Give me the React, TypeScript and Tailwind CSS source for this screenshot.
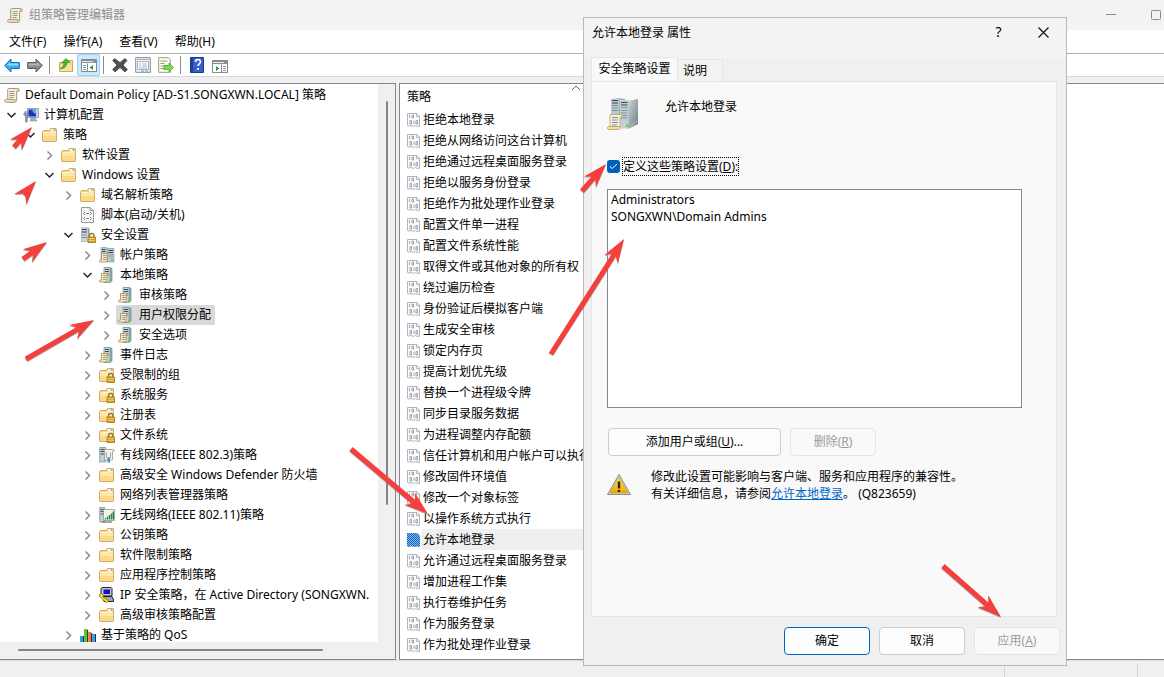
import React from "react";

type IconName =
  | "scroll" | "computer" | "folder" | "script" | "serverLock" | "servers" | "server"
  | "folderLock" | "wired" | "wireless" | "ipsec" | "qos";

type TreeItem = { level: number; label: string; icon: IconName; state?: "open" | "closed"; selected?: boolean };

const tree: TreeItem[] = [
  { level: 0, label: "Default Domain Policy [AD-S1.SONGXWN.LOCAL] 策略", icon: "scroll" },
  { level: 1, label: "计算机配置", icon: "computer", state: "open" },
  { level: 2, label: "策略", icon: "folder", state: "open" },
  { level: 3, label: "软件设置", icon: "folder", state: "closed" },
  { level: 3, label: "Windows 设置", icon: "folder", state: "open" },
  { level: 4, label: "域名解析策略", icon: "folder", state: "closed" },
  { level: 4, label: "脚本(启动/关机)", icon: "script" },
  { level: 4, label: "安全设置", icon: "serverLock", state: "open" },
  { level: 5, label: "帐户策略", icon: "servers", state: "closed" },
  { level: 5, label: "本地策略", icon: "server", state: "open" },
  { level: 6, label: "审核策略", icon: "server", state: "closed" },
  { level: 6, label: "用户权限分配", icon: "server", state: "closed", selected: true },
  { level: 6, label: "安全选项", icon: "server", state: "closed" },
  { level: 5, label: "事件日志", icon: "server", state: "closed" },
  { level: 5, label: "受限制的组", icon: "folderLock", state: "closed" },
  { level: 5, label: "系统服务", icon: "folderLock", state: "closed" },
  { level: 5, label: "注册表", icon: "folderLock", state: "closed" },
  { level: 5, label: "文件系统", icon: "folderLock", state: "closed" },
  { level: 5, label: "有线网络(IEEE 802.3)策略", icon: "wired", state: "closed" },
  { level: 5, label: "高级安全 Windows Defender 防火墙", icon: "folder", state: "closed" },
  { level: 5, label: "网络列表管理器策略", icon: "folder" },
  { level: 5, label: "无线网络(IEEE 802.11)策略", icon: "wireless", state: "closed" },
  { level: 5, label: "公钥策略", icon: "folder", state: "closed" },
  { level: 5, label: "软件限制策略", icon: "folder", state: "closed" },
  { level: 5, label: "应用程序控制策略", icon: "folder", state: "closed" },
  { level: 5, label: "IP 安全策略，在 Active Directory (SONGXWN.", icon: "ipsec", state: "closed" },
  { level: 5, label: "高级审核策略配置", icon: "folder", state: "closed" },
  { level: 4, label: "基于策略的 QoS", icon: "qos", state: "closed" },
];

const indents = ["pl-0", "pl-1", "pl-[23px]", "pl-[42px]", "pl-[61px]", "pl-20", "pl-[99px]"];

const policies = [
  "拒绝本地登录", "拒绝从网络访问这台计算机", "拒绝通过远程桌面服务登录", "拒绝以服务身份登录",
  "拒绝作为批处理作业登录", "配置文件单一进程", "配置文件系统性能", "取得文件或其他对象的所有权",
  "绕过遍历检查", "身份验证后模拟客户端", "生成安全审核", "锁定内存页", "提高计划优先级",
  "替换一个进程级令牌", "同步目录服务数据", "为进程调整内存配额", "信任计算机和用户帐户可以执行委派",
  "修改固件环境值", "修改一个对象标签", "以操作系统方式执行", "允许本地登录", "允许通过远程桌面服务登录",
  "增加进程工作集", "执行卷维护任务", "作为服务登录", "作为批处理作业登录",
];

const arrows: [number, number, number, number][] = [
  [14, 147, 32, 127],
  [24, 195, 36, 181],
  [23, 259, 47, 242],
  [26, 359, 94, 320],
  [582, 191, 606, 164],
  [551, 354, 624, 239],
  [351, 449, 428, 514],
  [943, 566, 1001, 617],
];

function Svg({ children, size = 16 }: { children: React.ReactNode; size?: number }) {
  return (
    <svg width={size} height={size} viewBox="0 0 16 16" className="block shrink-0" aria-hidden="true">
      {children}
    </svg>
  );
}

function ScrollShape() {
  return (
    <>
      <path d="M4.5 1.5h9.2c1 0 1.6.7 1.6 1.6s-.6 1.4-1.4 1.4h-1.3v8.8c0 1.2-.7 1.9-1.7 1.9H3.5" fill="#f8efd0" stroke="#a39b86" />
      <path d="M4.5 1.5c-.6.3-.8.8-.8 1.5v9.5h7.2v1.2c0 .8-.4 1.5-1 1.5H2.2C1.200 15.200.600 14.700.600 13.900s.5-1.400 1.300-1.400h1.800" fill="#f5e8be" stroke="#a39b86" />
      <path d="M5.500 4.500h5M5.500 6.500h5M5.500 8.500h5M5.500 10.500h4" stroke="#9a95a0" />
      <path d="M13 2.200h1.700v1.700H13z" fill="#dcb75c" />
    </>
  );
}

function FolderShape() {
  return (
    <>
      <path d="M.5 4.500 1.500 3.500h5.500l1.500-2h5.500l.5.500v12l-.5.500H1l-.5-.5z" fill="#f5d488" stroke="#d3ad5f" />
      <path d="M9 2.300h4.500v1.400H9z" fill="#fff" />
      <path d="M11.500 2.300h2v1.400h-2z" fill="#5da9dc" />
      <path d="M1 5h7l1-1h5v5H1z" fill="#fde6a6" />
      <path d="M1 9h13v5H1z" fill="#fad98a" />
      <path d="M1.500 5.500h7l1-1h4" fill="none" stroke="#fff3cc" />
    </>
  );
}

function LockShape() {
  return (
    <>
      <path d="M9.500 10V8.500a2.200 2.200 0 0 1 4.400 0V10" fill="none" stroke="#8b7438" strokeWidth="1.300" />
      <path d="M8 10h7.500v5.500H8z" fill="#d5a32c" stroke="#a27413" strokeWidth=".8" />
      <path d="M8.500 11.500h6.500M8.500 13.500h6.500" stroke="#f2cf67" strokeWidth=".8" />
    </>
  );
}

function ServerShape() {
  return (
    <>
      <path d="M5 .5h6.500l1.500 1v12.500l-2 1.500H5z" fill="#8fa1aa" stroke="#7a8b93" strokeWidth=".7" />
      <path d="M5.500 1h5v14h-5z" fill="#cad6dc" />
      <path d="M6 2.500h4M6 4.500h4" stroke="#2f4b5b" />
      <path d="M6 6.500h4M6 8.500h4" stroke="#8fa1aa" />
      <path d="M10 12.500h2v2h-2z" fill="#4fe315" />
    </>
  );
}

function SmallScroll() {
  return (
    <>
      <path d="M2.500 6.500h6.500v1.500H8v7H1c-1-.4-1-2 .3-2h1.200z" fill="#f6ebc4" stroke="#a08d58" strokeWidth=".8" />
      <path d="M4 8.500h3M4 10.500h3M4 12.500h3" stroke="#8f8770" strokeWidth=".8" />
    </>
  );
}

function Icon({ name }: { name: IconName }) {
  switch (name) {
    case "scroll":
      return <Svg><ScrollShape /></Svg>;
    case "folder":
      return <Svg><FolderShape /></Svg>;
    case "folderLock":
      return <Svg><FolderShape /><LockShape /></Svg>;
    case "computer":
      return (
        <Svg>
          <path d="M4.500 1.500h11v9h-11z" fill="#c9d3dc" stroke="#8794a0" strokeWidth=".8" />
          <path d="M5.500 2.500H13v7H5.500z" fill="#1237c4" />
          <path d="M9 2.500h4v4c-2 .5-3-1-4-4z" fill="#7ba4ee" />
          <path d="M8 11h4l2 3H7z" fill="#a9b4bd" stroke="#77838d" strokeWidth=".5" />
          <path d="M.7 7.200 2.500 4l.5 3 1.300.200V4.500l1 2.200-1 2.300v5.500c-.2 1-1.600 1-1.800 0V9C1.500 8.800.7 8 .7 7.200z" fill="#8ea2b2" stroke="#5a7084" strokeWidth=".6" />
        </Svg>
      );
    case "script":
      return (
        <Svg>
          <path d="M1.500.500H10l3.500 3v12h-12V1z" fill="#f8f8f8" stroke="#9b9b9b" />
          <path d="M10 .5v3h3.500" fill="none" stroke="#9b9b9b" />
          <path d="m5 5-1.500 1.500L5 8M10 5l1.500 1.500L10 8M5 10l-1.500 1.500L5 13M10 10l1.500 1.500L10 13M6 6.500h3M6 11.500h3" fill="none" stroke="#555e70" strokeWidth=".8" />
        </Svg>
      );
    case "serverLock":
      return (
        <Svg>
          <path d="M1 .5h7l1.500 1V15H1z" fill="#91a2ab" />
          <path d="M1.500 1H8v13.500H1.500z" fill="#c9d4d9" />
          <path d="M2 2.500h5M2 5h5" stroke="#294352" strokeWidth="1.200" />
          <path d="M2 8h5M2 10.500h5" stroke="#7f929c" />
          <LockShape />
        </Svg>
      );
    case "servers":
      return (
        <Svg>
          <path d="M2 .5h6V13H2z" fill="#bccad0" stroke="#80929b" strokeWidth=".6" />
          <path d="M3 2.500h3.500M3 4.500h3.500" stroke="#334e5d" />
          <path d="M8.500 1.500H15V15H8.500z" fill="#bccad0" stroke="#80929b" strokeWidth=".6" />
          <path d="M9.500 3.500H14M9.500 5.500H14" stroke="#334e5d" />
          <path d="M9.500 8H14M9.500 10H14" stroke="#8fa1aa" />
          <path d="M12 12.500h2v2h-2z" fill="#4fe315" />
          <SmallScroll />
        </Svg>
      );
    case "server":
      return <Svg><ServerShape /><SmallScroll /></Svg>;
    case "wired":
      return (
        <Svg>
          <path d="M.7.500h6V15h-6z" fill="#c2ced4" stroke="#778a94" strokeWidth=".7" />
          <path d="M1.500 2.500H6M1.500 4.500H6M1.500 7H6" stroke="#3c5362" />
          <path d="M5.500 2.500h9.200c1 .3.9 2-.3 2H13.500v8.500h-8z" fill="#f5f3ea" stroke="#9c9788" strokeWidth=".8" />
          <path d="M7.500 5.500v5h4v-5M9.500 10.500v5" fill="none" stroke="#9aa3ad" />
          <path d="M8.500 11H11v4.500H8.500z" fill="#4a90c6" />
        </Svg>
      );
    case "wireless":
      return (
        <Svg>
          <path d="M.7.500h5V15h-5z" fill="#c2ced4" stroke="#778a94" strokeWidth=".7" />
          <path d="M1.500 2.500H5M1.500 4.500H5M1.500 7H5" stroke="#3c5362" />
          <path d="M4.500 2.500h11v11h-11z" fill="#f5f3ea" stroke="#9c9788" strokeWidth=".8" />
          <path d="M6.500 12.500V11M8.500 12.500V9.500M10.500 12.500V8M12.500 12.500V6.500M14.300 12.500V4.500" stroke="#1b8d4b" strokeWidth="1.400" />
          <path d="M3 15h10" stroke="#555" />
        </Svg>
      );
    case "ipsec":
      return (
        <Svg>
          <path d="M4 .5h8l1 1v7.500H2V1.500z" fill="#c3c3cc" stroke="#222" />
          <path d="M4.500 2.500H11v4.500H4.500z" fill="#1010d0" />
          <path d="M4 9.500h9l1.500 3.500v1.500H5z" fill="#a3a3ad" stroke="#222" />
          <path d="M.7 7.500 2.500 6.500l2 2L4 10l5.500 4L8 15.500 6.500 15 2.500 11 .7 10z" fill="#ffee12" stroke="#726a00" strokeWidth=".7" />
        </Svg>
      );
    case "qos":
      return (
        <Svg>
          <path d="M0 9h4v6H0z" fill="#2e9be6" /><path d="M3 9h1.200v6H3z" fill="#123c5d" />
          <path d="M4 2h3.500v13H4z" fill="#5fc332" /><path d="M7 3h1.200v12H7z" fill="#1f4d12" />
          <path d="M8.200 5h3v10h-3z" fill="#f0784e" /><path d="M11 6h1.200v9H11z" fill="#57200d" />
          <path d="M12.200 7h3v8h-3z" fill="#2e9be6" /><path d="M15 7h1v8h-1z" fill="#123c5d" />
        </Svg>
      );
  }
}

function Chevron({ state }: { state?: "open" | "closed" }) {
  return (
    <svg width="16" height="16" viewBox="0 0 16 16" className="mr-[3px] block shrink-0" aria-hidden="true">
      {state === "open" && <path d="m3.500 6 4 4 4-4" fill="none" stroke="#262626" strokeWidth="1.500" />}
      {state === "closed" && <path d="m5.500 4.500 4 4-4 4" fill="none" stroke="#8a8a8a" strokeWidth="1.500" />}
    </svg>
  );
}

function PolicyIcon({ selected }: { selected?: boolean }) {
  return (
    <Svg>
      <path d="M1.500 1.500h9.500l2.500 2.500v10.500l-1.500-.5-1 .5-1.500-1-2 1-2.500-1-2 .5-1.500-.5z" fill="#fafafa" stroke="#b4b4b8" />
      <path d="M10.500 1.500v3h3" fill="none" stroke="#b4b4b8" />
      <path d="M3.500 3v3M8 8.500v3.500M4 8.500h1.500V12H4zM10 8.500h1.500V12H10zM6 3h1.500v3H6z" fill="none" stroke="#9090aa" strokeWidth=".8" />
      {selected && (
        <>
          <defs>
            <pattern id="selectedDots" width="2" height="2" patternUnits="userSpaceOnUse">
              <path d="M0 0h1v1H0zM1 1h1v1H1z" fill="#0067c0" />
            </pattern>
          </defs>
          <path d="M1 1h10l3 3v11h-1l-2-1-2 1-3-1-3 1-2-1z" fill="#8fbbe2" />
          <path d="M1 1h10l3 3v11h-1l-2-1-2 1-3-1-3 1-2-1z" fill="url(#selectedDots)" />
        </>
      )}
    </Svg>
  );
}

function ToolButton({ label, active, children }: { label: string; active?: boolean; children: React.ReactNode }) {
  return (
    <button
      type="button"
      aria-label={label}
      className={
        active
          ? "flex h-[22px] w-[23px] items-center justify-center rounded-xs border border-[#99d1ff] bg-[#cce8ff]"
          : "flex h-[22px] w-[23px] items-center justify-center"
      }
    >
      <Svg>{children}</Svg>
    </button>
  );
}

function Separator() {
  return <span className="mr-1 ml-[3px] h-[18px] w-px bg-[#8c8c8c]" />;
}

function Toolbar() {
  return (
    <div role="toolbar" aria-label="工具栏" className="flex h-[23px] shrink-0 items-center border-b border-[#d9d9d9] bg-white">
      <ToolButton label="后退">
        <path d="M.7 8.500 7 2v3.500h8.300v6H7V15z" fill="#35aef0" stroke="#176fae" />
        <path d="M2.500 8.500 6 5v1.500h8.300v2z" fill="#8ad8fb" />
      </ToolButton>
      <ToolButton label="前进">
        <path d="M15.300 8.500 9 2v3.500H.7v6H9V15z" fill="#8a8a8a" stroke="#5d5d5d" />
        <path d="M13.500 8.500 10 5v1.500H1.700v2z" fill="#b3b3b3" />
      </ToolButton>
      <Separator />
      <ToolButton label="上一级">
        <path d="M1.500 5.500h6l1.500-2h5.500v11h-13z" fill="#f8d98f" stroke="#cfa858" />
        <path d="M2 8h12v6H2z" fill="#fbe0a0" />
        <path d="M2 11.500c3-1 4-3 4-5.500H3.500L8 1.500 12 5.500H9c0 4-3 6.500-7 6z" fill="#3fc02a" stroke="#1f8a16" strokeWidth=".6" />
      </ToolButton>
      <ToolButton label="显示控制台树" active>
        <path d="M.5 2.500h15v12H.5z" fill="#fff" stroke="#85898f" />
        <path d="M1 3h14v3H1z" fill="#8b8f96" />
        <path d="M1 4.500h11" stroke="#e9e9e9" />
        <path d="M2 8.500h3M2 10.500h3M2 12.500h3" stroke="#7b95b0" />
        <path d="M6.500 6.500v8" stroke="#85898f" />
        <path d="M12 8v5L8.500 10.500z" fill="#20a532" />
      </ToolButton>
      <Separator />
      <ToolButton label="删除">
        <path d="m2.500 1.500 5.500 4 5-4 2 2-4 4.500 4.500 4.500-2.500 2.500-5-4.500-5 4.500L.7 12.500 5 8 .7 3.700z" fill="#505050" stroke="#2f2f2f" strokeWidth=".6" />
      </ToolButton>
      <ToolButton label="属性">
        <path d="M.7.700h14.600v14.600H.7z" fill="#f4f6f8" stroke="#85898f" />
        <path d="M2 2.500h12" stroke="#a3b1c0" />
        <path d="M2.500 4.500h11v8h-11z" fill="#fff" stroke="#8593a5" strokeWidth=".7" />
        <path d="M4 7h2M7 7h5M4 9h2M7 9h5M4 11h8" stroke="#8aa2bc" strokeWidth=".8" />
        <path d="M6 14h3M10 14h3" stroke="#35b6e4" />
      </ToolButton>
      <ToolButton label="导出列表">
        <path d="M.7.700h9.600l2 2v12.600H.7z" fill="#fffdf0" stroke="#9c9c88" />
        <path d="M2.500 4h7M2.500 6.500h4M2.500 9h4M2.500 11.500h7" stroke="#9d9772" />
        <path d="M6 8.500h5V6l4.500 4.500L11 15v-2.500H6z" fill="#7fd94e" stroke="#3f9c23" strokeWidth=".7" />
      </ToolButton>
      <Separator />
      <ToolButton label="帮助">
        <path d="M1.500.500h13v15h-13z" fill="#3a5fc8" stroke="#1c3a8c" />
        <path d="M2 1h2v14H2z" fill="#1f3f9f" />
        <path d="M6.500 5c0-3.300 5-3.300 5-.2 0 2-2.500 2-2.500 4.200M9 11v2" fill="none" stroke="#fff" strokeWidth="1.700" />
      </ToolButton>
      <ToolButton label="显示操作窗格">
        <path d="M.5 3.500h15v12H.5z" fill="#fff" stroke="#85898f" />
        <path d="M1 4h14v3H1z" fill="#8b8f96" />
        <path d="M1 5.500h11" stroke="#e9e9e9" />
        <path d="M11 9.500h3M11 11.500h3M11 13.500h3" stroke="#7b95b0" />
        <path d="M9.500 7.500v8" stroke="#85898f" />
        <path d="M4 9v5l3.500-2.500z" fill="#20a532" />
      </ToolButton>
    </div>
  );
}

function TreePane() {
  return (
    <section className="flex w-[396px] shrink-0 flex-col border-y border-r border-[#828790] bg-[#f0f0f0] pb-px">
      <div className="flex min-h-0 flex-1">
        <ul role="tree" aria-label="策略树" className="min-h-0 min-w-0 flex-1 overflow-hidden rounded-br-xs bg-white pt-px">
          {tree.map((item, i) => (
            <li
              key={i}
              role="treeitem"
              aria-selected={!!item.selected}
              aria-expanded={item.state ? item.state === "open" : undefined}
              className={`flex h-5 items-center whitespace-nowrap ${indents[item.level]}`}
            >
              {item.level > 0 && <Chevron state={item.state} />}
              <span
                className={
                  item.selected
                    ? "flex h-5 items-center gap-[5px] rounded-xs bg-[#d9d9d9] pr-1 pl-0.5 -ml-0.5"
                    : item.level === 0
                      ? "flex h-5 items-center gap-[5px] pl-1"
                      : "flex h-5 items-center gap-[5px]"
                }
              >
                <Icon name={item.icon} />
                {item.label}
              </span>
            </li>
          ))}
        </ul>
        <div className="flex w-[17px] shrink-0 justify-center pt-[17px]">
          <div className="h-[404px] w-0.5 rounded-full bg-[#858585]" />
        </div>
      </div>
      <div className="flex h-4 shrink-0 items-center pl-[18px]">
        <div className="h-0.5 w-[305px] rounded-full bg-[#858585]" />
      </div>
    </section>
  );
}

function PolicyList() {
  return (
    <section className="min-w-0 flex-1 overflow-hidden border-y border-l border-[#828790] bg-white">
      <div className="w-[352px]">
        <div className="grid h-[25px] grid-cols-1 grid-rows-1">
          <span className="col-start-1 row-start-1 self-center pl-[7px]">策略</span>
          <svg width="10" height="6" viewBox="0 0 10 6" className="col-start-1 row-start-1 mt-px justify-self-center" aria-hidden="true">
            <path d="m1 5 4-4 4 4" fill="none" stroke="#5f5f5f" />
          </svg>
        </div>
        <ul role="listbox" aria-label="策略">
          {policies.map((p, i) => {
            const selected = i === 20;
            return (
              <li key={p} role="option" aria-selected={selected} className="flex h-[21px] items-center pl-1.5 whitespace-nowrap">
                <PolicyIcon selected={selected} />
                <span className={selected ? "flex h-full flex-1 items-center bg-[#efefef] pl-px" : "flex-1 pl-px"}>{p}</span>
              </li>
            );
          })}
        </ul>
      </div>
    </section>
  );
}

function DialogIcon() {
  return (
    <svg width="32" height="32" viewBox="0 0 32 32" className="block" aria-hidden="true">
      <defs>
        <linearGradient id="side" x1="0" x2="1" y1="0" y2="1">
          <stop offset="0" stopColor="#cdd4d7" />
          <stop offset="1" stopColor="#6f7c82" />
        </linearGradient>
      </defs>
      <path d="M4 1 12 0l6 1v25H4z" fill="url(#side)" />
      <path d="M4 1h8v25H4z" fill="#bccad1" />
      <path d="M5 2.500h6M5 5h6" stroke="#2f4855" />
      <path d="M5 7.500h6M5 10h6M5 12.500h6" stroke="#7f929b" />
      <path d="m21 3 10-2v25l-10 5z" fill="url(#side)" />
      <path d="M13 2h8.500v28.500H13z" fill="#c4d0d6" />
      <path d="M14 4.500h6.500M14 7h6.500" stroke="#2f4855" />
      <path d="M14 9.500h6.500M14 12.500h6.500M14 15h6.500M14 17.500h6.500M14 20h6.500" stroke="#81949d" />
      <path d="M19 26.500h2.500v2.500H19z" fill="#4fe315" />
      <path d="m23 28 7-5" stroke="#dbe0e2" strokeDasharray="1.500 1" />
      <path d="M3 16.500h11c1.500.3 1.300 2.500 0 2.500h-1v10H3z" fill="#fbf4db" stroke="#c5ae6b" />
      <path d="M1.500 28.500h11c.8 1.500 0 3-1 3H1.500c-1.500-.5-1.500-2.500 0-3z" fill="#f3df9e" stroke="#b89d54" strokeWidth=".8" />
      <path d="M5 19.500h6M5 22h6M5 24.500h6M5 27h5" stroke="#7e83a8" />
    </svg>
  );
}

function WarningIcon() {
  return (
    <svg width="24" height="24" viewBox="0 0 24 24" className="block shrink-0" aria-hidden="true">
      <defs>
        <linearGradient id="warn" x1="0" x2="0" y1="0" y2="1">
          <stop offset="0" stopColor="#ffe94a" />
          <stop offset="1" stopColor="#f0a800" />
        </linearGradient>
      </defs>
      <path d="M12 1.500 23.500 21.500H.5z" fill="#d9d9d9" stroke="#8b8b8b" strokeLinejoin="round" />
      <path d="M12 4.500 21 20H3z" fill="url(#warn)" stroke="#c79a10" strokeWidth=".7" />
      <path d="M12 8.500v7M12 17v2" stroke="#2c2200" strokeWidth="2.400" />
    </svg>
  );
}

function PropertiesDialog() {
  return (
    <div role="dialog" aria-label="允许本地登录 属性" className="absolute top-[17px] left-[583px] flex w-[484px] flex-col border border-[#b9b9b9] bg-[#f0f0f0]">
      <header className="flex h-10 items-center bg-[#f3f3f3] pl-2">
        <h2 className="flex-1 pb-2.5">允许本地登录 属性</h2>
        <button type="button" aria-label="帮助" className="h-10 w-[45px] pb-3 text-sm">?</button>
        <button type="button" aria-label="关闭" className="flex h-10 w-[45px] items-center justify-center pb-3">
          <svg width="11" height="11" viewBox="0 0 11 11" aria-hidden="true">
            <path d="m.5.500 10 10M10.500.500l-10 10" stroke="#111" strokeWidth="1.200" />
          </svg>
        </button>
      </header>
      <div role="tablist" className="flex h-[23px] items-end pl-[7px]">
        <button type="button" role="tab" aria-selected="true" className="-mb-px h-[25px] w-[87px] border border-b-0 border-[#e5e5e5] bg-[#f9f9f9] pb-0.5">
          安全策略设置
        </button>
        <button type="button" role="tab" aria-selected="false" className="h-[22px] w-[45px] border border-b-0 border-l-0 border-[#e5e5e5] bg-[#f3f3f3] pr-2.5">
          说明
        </button>
      </div>
      <div role="tabpanel" className="mr-[9px] ml-[7px] flex h-[536px] flex-col border border-[#e5e5e5] bg-[#f9f9f9] pl-[15px]">
        <div className="flex h-[75px] gap-[26px] pt-4">
          <DialogIcon />
          <span className="h-[18px] leading-[18px]">允许本地登录</span>
        </div>
        <div className="flex h-[19px] items-center gap-0.5">
          <span className="grid size-[13px] place-items-center">
            <input id="define" type="checkbox" defaultChecked className="col-start-1 row-start-1 size-[13px] appearance-none rounded-[3px] bg-[#005fb8]" />
            <svg width="9" height="7" viewBox="0 0 9 7" className="pointer-events-none col-start-1 row-start-1" aria-hidden="true">
              <path d="m1 3.500 2.200 2L8 1" fill="none" stroke="#fff" />
            </svg>
          </span>
          <label htmlFor="define" className="flex h-[19px] items-center border border-dotted border-black whitespace-nowrap">
            <span>定义这些策略设置(<u>D</u>):</span>
          </label>
        </div>
        <ul role="listbox" aria-label="用户或组" className="mt-[13px] mr-[34px] h-[219px] border border-[#828790] bg-white px-[3px] pt-px leading-[17px]">
          <li role="option" aria-selected="false">Administrators</li>
          <li role="option" aria-selected="false">SONGXWN\Domain Admins</li>
        </ul>
        <div className="mt-5 flex gap-[9px] pl-px">
          <button type="button" className="h-7 w-[173px] rounded border border-[#cccccc] bg-[#fdfdfd]">添加用户或组(<u>U</u>)...</button>
          <button type="button" disabled className="h-7 w-[86px] rounded border border-[#e5e5e5] bg-[#f9f9f9] text-[#9b9b9b]">删除(<u>R</u>)</button>
        </div>
        <div className="mt-3 flex items-center gap-5">
          <WarningIcon />
          <p className="leading-[17px] whitespace-nowrap">
            修改此设置可能影响与客户端、服务和应用程序的兼容性。
            <br />
            有关详细信息，请参阅<a href="#help" className="text-[#0067c8] underline">允许本地登录</a>。 (Q823659)
          </p>
        </div>
      </div>
      <footer className="flex justify-end gap-[9px] py-2.5 pr-1.5">
        <button type="button" className="h-7 w-[86px] rounded border border-[#0067c0] bg-[#fdfdfd]">确定</button>
        <button type="button" className="h-7 w-[86px] rounded border border-[#cccccc] bg-[#fdfdfd]">取消</button>
        <button type="button" disabled className="h-7 w-[86px] rounded border border-[#e5e5e5] bg-[#f9f9f9] text-[#9b9b9b]">应用(<u>A</u>)</button>
      </footer>
    </div>
  );
}

function Arrows() {
  return (
    <svg width="1164" height="677" viewBox="0 0 1164 677" className="pointer-events-none absolute top-0 left-0" aria-hidden="true">
      {arrows.map(([x1, y1, x2, y2], i) => {
        const length = Math.hypot(x2 - x1, y2 - y1);
        const angle = (Math.atan2(y2 - y1, x2 - x1) * 180) / Math.PI;
        const points = `0,0 -24,-8 -19,-2.500 ${-length},-2.500 ${-length},2.500 -19,2.500 -24,8`;
        return (
          <g key={i}>
            <polygon points={points} transform={`translate(${x2} ${y2 + 1}) rotate(${angle})`} fill="#777" opacity=".6" />
            <polygon points={points} transform={`translate(${x2} ${y2}) rotate(${angle})`} fill="#f43f3c" />
          </g>
        );
      })}
    </svg>
  );
}

export default function App() {
  return (
    <div className="relative flex h-screen flex-col overflow-hidden bg-[#f0f0f0] font-['Noto_Sans','Noto_Sans_CJK_SC',sans-serif] text-xs text-black">
      <header className="flex h-[30px] shrink-0 items-center bg-[#f3f3f3] pl-[7px]">
        <Icon name="scroll" />
        <h1 className="flex-1 pl-1.5 text-[#8f8f8f]">组策略管理编辑器</h1>
        <button type="button" aria-label="最小化" className="flex h-full w-[45px] items-center justify-center">
          <svg width="10" height="2" viewBox="0 0 10 2" aria-hidden="true"><path d="M0 .5h10" stroke="#8c8c8c" /></svg>
        </button>
        <button type="button" aria-label="最大化" className="flex h-full w-[31px] items-center justify-end pr-[3px]">
          <svg width="10" height="10" viewBox="0 0 10 10" aria-hidden="true"><rect x=".5" y=".5" width="9" height="9" rx="1" fill="none" stroke="#8c8c8c" /></svg>
        </button>
      </header>
      <nav className="flex h-6 shrink-0 items-center gap-px border-b border-[#aeb0b8] bg-white pl-px">
        {["文件(F)", "操作(A)", "查看(V)", "帮助(H)"].map((m) => (
          <button key={m} type="button" className="px-2">{m}</button>
        ))}
      </nav>
      <Toolbar />
      <main className="flex min-h-0 flex-1 gap-[3px] pt-1.5">
        <TreePane />
        <PolicyList />
      </main>
      <footer className="flex h-[17px] shrink-0 justify-end border-t border-[#dcdcdc] pt-0.5">
        <span className="w-[133px] border-l border-[#d5d5d5]" />
        <span className="w-[27px] border-l border-[#d5d5d5]" />
      </footer>
      <PropertiesDialog />
      <Arrows />
    </div>
  );
}
